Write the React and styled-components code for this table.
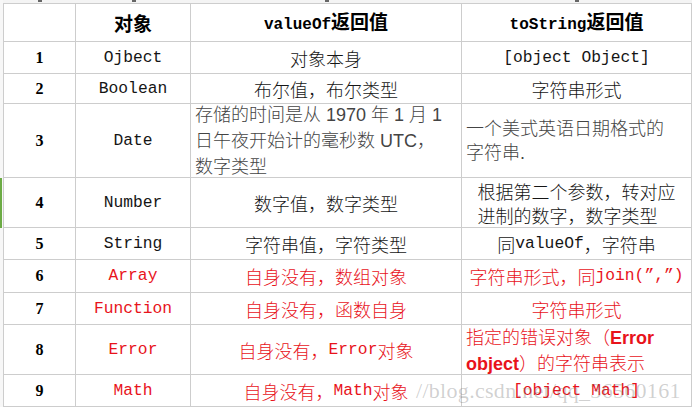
import styled, { createGlobalStyle } from "styled-components";

const GlobalStyle = createGlobalStyle`
  html, body {
    margin: 0;
    padding: 0;
    background: #ffffff;
  }
  body {
    font-family: "Noto Sans CJK SC", sans-serif;
  }
`;

const RED = "#e8131b";
const LINE = "#cdcdcd";

const Sheet = styled.div`
  position: relative;
  width: 694px;
  height: 410px;
  overflow: hidden;
  background: #ffffff;
`;

const Grid = styled.div`
  display: grid;
  grid-template-columns: 3px 73px 115px 271px 230px;
  grid-template-rows: ${(p) => p.$rows.map((h) => `${h}px`).join(" ")};
`;

const Gutter = styled.div`
  background: #f7f7f7;
  box-shadow: ${(p) => (p.$selected ? "inset 2px 0 0 #6cab45" : "none")};
`;

const Strip = styled.div`
  display: flex;
  justify-content: center;
  align-items: flex-start;
  background: #f4f4f4;
`;

const Tick = styled.span`
  width: 4px;
  height: 2px;
  background: #666;
`;

const Cell = styled.div`
  box-sizing: border-box;
  display: flex;
  align-items: center;
  justify-content: ${(p) => (p.$align === "left" ? "flex-start" : "center")};
  padding: ${(p) => (p.$align === "left" ? "0 0 0 4px" : "0")};
  border-right: 1px solid ${LINE};
  border-bottom: 1px solid ${LINE};
  border-left: ${(p) => (p.$first ? `1px solid ${LINE}` : "none")};
  border-top: ${(p) => (p.$top ? `1px solid ${LINE}` : "none")};
  color: ${(p) => (p.$red ? RED : "#151515")};
  font-family: "Noto Sans CJK SC", sans-serif;
  font-weight: 300;
  font-size: 18px;
  line-height: 24px;
  white-space: nowrap;
`;

const Head = styled.span`
  font-family: "Noto Sans CJK SC", sans-serif;
  font-weight: 700;
  font-size: 19px;
  color: #000;
`;

const HeadCode = styled.span`
  font-family: "Liberation Mono", monospace;
  font-weight: 700;
  font-size: 16px;
`;

const Code = styled.span`
  font-family: "Liberation Mono", monospace;
  font-weight: 400;
  font-size: 16.3px;
`;

const Num = styled.span`
  font-family: "Liberation Serif", serif;
  font-weight: 700;
  font-size: 16px;
  color: #000;
`;

const Plain = styled.span`
  font-family: "Liberation Sans", "Noto Sans CJK SC", sans-serif;
  font-size: 18px;
  line-height: ${(p) => (p.$tight ? "24px" : "26px")};
  color: #444;
`;

const Lines = styled.span`
  line-height: 24px;
`;

const Strong = styled.span`
  font-family: "Liberation Sans", sans-serif;
  font-weight: 700;
  font-size: 18px;
`;

const Watermark = styled.div`
  position: absolute;
  left: 416px;
  top: 378px;
  font-family: "Liberation Serif", serif;
  font-size: 22px;
  letter-spacing: 0.3px;
  color: rgba(110, 110, 110, 0.32);
  pointer-events: none;
  white-space: nowrap;
`;

const rows = [
  {
    n: "1",
    h: 32,
    name: "Ojbect",
    value: "对象本身",
    str: <Code>[object Object]</Code>,
  },
  {
    n: "2",
    h: 30,
    name: "Boolean",
    value: "布尔值，布尔类型",
    str: "字符串形式",
  },
  {
    n: "3",
    h: 74,
    name: "Date",
    value: (
      <Plain>
        存储的时间是从 1970 年 1 月 1<br />
        日午夜开始计的毫秒数 UTC，<br />
        数字类型
      </Plain>
    ),
    valueAlign: "left",
    str: (
      <Plain $tight>
        一个美式英语日期格式的<br />
        字符串.
      </Plain>
    ),
    strAlign: "left",
  },
  {
    n: "4",
    h: 50,
    name: "Number",
    value: "数字值，数字类型",
    str: (
      <Lines>
        根据第二个参数，转对应<br />
        进制的数字，数字类型
      </Lines>
    ),
    selected: true,
  },
  {
    n: "5",
    h: 32,
    name: "String",
    value: "字符串值，字符类型",
    str: (
      <>
        同<Code>valueOf</Code>，字符串
      </>
    ),
  },
  {
    n: "6",
    h: 33,
    name: "Array",
    red: true,
    value: "自身没有，数组对象",
    str: (
      <>
        字符串形式，同<Code>join(”,”)</Code>
      </>
    ),
  },
  {
    n: "7",
    h: 32,
    name: "Function",
    red: true,
    value: "自身没有，函数自身",
    str: "字符串形式",
  },
  {
    n: "8",
    h: 50,
    name: "Error",
    red: true,
    value: (
      <>
        自身没有，<Code>Error</Code>对象
      </>
    ),
    str: (
      <Lines>
        指定的错误对象（<Strong>Error</Strong>
        <br />
        <Strong>object</Strong>）的字符串表示
      </Lines>
    ),
    strAlign: "left",
  },
  {
    n: "9",
    h: 32,
    name: "Math",
    red: true,
    value: (
      <>
        自身没有，<Code>Math</Code>对象
      </>
    ),
    str: <Code>[object Math]</Code>,
  },
];

function Row({ row }) {
  return (
    <>
      <Gutter $selected={row.selected} />
      <Cell $first>
        <Num>{row.n}</Num>
      </Cell>
      <Cell $red={row.red}>
        <Code>{row.name}</Code>
      </Cell>
      <Cell $red={row.red} $align={row.valueAlign}>
        {row.value}
      </Cell>
      <Cell $red={row.red} $align={row.strAlign}>
        {row.str}
      </Cell>
    </>
  );
}

export default function App() {
  const heights = [3, 39, ...rows.map((r) => r.h)];

  return (
    <>
      <GlobalStyle />
      <Sheet>
        <Grid $rows={heights}>
          <Gutter />
          {[0, 1, 2, 3].map((i) => (
            <Strip key={i}>
              <Tick />
            </Strip>
          ))}

          <Gutter />
          <Cell $first $top />
          <Cell $top>
            <Head>对象</Head>
          </Cell>
          <Cell $top>
            <Head>
              <HeadCode>valueOf</HeadCode>返回值
            </Head>
          </Cell>
          <Cell $top>
            <Head>
              <HeadCode>toString</HeadCode>返回值
            </Head>
          </Cell>

          {rows.map((r) => (
            <Row key={r.n} row={r} />
          ))}
        </Grid>
        <Watermark>//blog.csdn.net/qq_36560161</Watermark>
      </Sheet>
    </>
  );
}
